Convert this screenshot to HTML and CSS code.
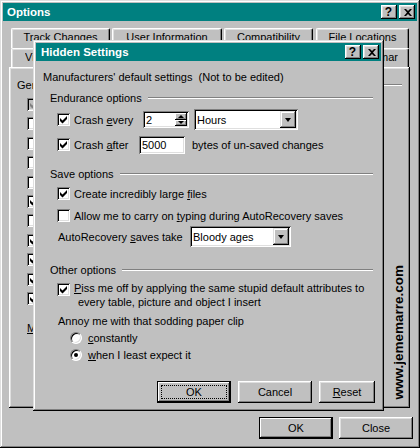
FILE: index.html
```html
<!DOCTYPE html>
<html>
<head>
<meta charset="utf-8">
<title>Options</title>
<link rel="stylesheet" href="styles.css">
</head>
<body>
<div class="window">
  <div class="titlebar">
    <span class="title">Options</span>
    <span class="tbtn q">?</span>
    <span class="tbtn"><svg width="8" height="7" viewBox="0 0 8 7"><path d="M0 0h2l2 2 2-2h2L5 3.5 8 7H6L4 5 2 7H0l3-3.5z"/></svg></span>
  </div>

  <div class="tabs">
    <div class="tabrow back">
      <div class="tab t-tc">Track Changes</div>
      <div class="tab t-ui">User Information</div>
      <div class="tab t-co">Compatibility</div>
      <div class="tab t-fl">File Locations</div>
    </div>
    <div class="tabrow front">
      <div class="tab t-vi"><span class="clip-v">View</span></div>
      <div class="tab t-ge"></div>
      <div class="tab t-ed"></div>
      <div class="tab t-pr"></div>
      <div class="tab t-sa"></div>
      <div class="tab t-sg"><span class="clip-sg"><span>Spelling &amp; Grammar</span></span></div>
    </div>
  </div>

  <div class="panel">
    <div class="grp gen-head"><span class="clip-gen">General options</span><i class="rule gen-rule"></i></div>
    <div class="gen-list">
      <div class="gen-item"><span class="box dis"><svg width="13" height="13" viewBox="0 0 13 13"><polygon points="3,5 5.5,7.5 10,3 10,6 5.5,10.5 3,8"/></svg></span></div>
      <div class="gen-item"><span class="box"></span></div>
      <div class="gen-item"><span class="box"></span></div>
      <div class="gen-item"><span class="box"></span></div>
      <div class="gen-item"><span class="box"></span></div>
      <div class="gen-item"><span class="box"><svg width="13" height="13" viewBox="0 0 13 13"><polygon points="3,5 5.5,7.5 10,3 10,6 5.5,10.5 3,8"/></svg></span></div>
      <div class="gen-item"><span class="box"></span></div>
      <div class="gen-item"><span class="box"><svg width="13" height="13" viewBox="0 0 13 13"><polygon points="3,5 5.5,7.5 10,3 10,6 5.5,10.5 3,8"/></svg></span></div>
      <div class="gen-item"><span class="box"><svg width="13" height="13" viewBox="0 0 13 13"><polygon points="3,5 5.5,7.5 10,3 10,6 5.5,10.5 3,8"/></svg></span></div>
      <div class="gen-item"><span class="box"><svg width="13" height="13" viewBox="0 0 13 13"><polygon points="3,5 5.5,7.5 10,3 10,6 5.5,10.5 3,8"/></svg></span></div>
      <div class="gen-item"><span class="box"><svg width="13" height="13" viewBox="0 0 13 13"><polygon points="3,5 5.5,7.5 10,3 10,6 5.5,10.5 3,8"/></svg></span></div>
    </div>
    <div class="units"><u>M</u>easurement units:</div>
  </div>

  <div class="mainbtns">
    <div class="btn def">OK</div>
    <div class="btn">Close</div>
  </div>

  <div class="watermark">www.jememarre.com</div>

  <div class="dialog">
    <div class="titlebar dtitle">
      <span class="title">Hidden Settings</span>
      <span class="tbtn q">?</span>
      <span class="tbtn"><svg width="8" height="7" viewBox="0 0 8 7"><path d="M0 0h2l2 2 2-2h2L5 3.5 8 7H6L4 5 2 7H0l3-3.5z"/></svg></span>
    </div>
    <div class="dbody">
      <div class="r r-manu">Manufacturers' default settings&nbsp; (Not to be edited)</div>

      <div class="r grp r-endur"><span>Endurance options</span><i class="rule"></i></div>
      <div class="r r-every">
        <div class="chk lbl-every"><span class="box"><svg width="13" height="13" viewBox="0 0 13 13"><polygon points="3,5 5.5,7.5 10,3 10,6 5.5,10.5 3,8"/></svg></span><span>Crash <u>e</u>very</span></div>
        <div class="field spin"><span class="val">2</span><span class="spinbtns"><b class="sb"><i class="up"></i></b><b class="sb"><i class="dn"></i></b></span></div>
        <div class="field combo c-hours"><span class="val">Hours</span><b class="dropbtn"><i class="dn2"></i></b></div>
      </div>
      <div class="r r-after">
        <div class="chk lbl-after"><span class="box"><svg width="13" height="13" viewBox="0 0 13 13"><polygon points="3,5 5.5,7.5 10,3 10,6 5.5,10.5 3,8"/></svg></span><span>Crash <u>a</u>fter</span></div>
        <div class="field num"><span class="val">5000</span></div>
        <span class="bytes">bytes of un-saved changes</span>
      </div>

      <div class="r grp r-save"><span>Save options</span><i class="rule"></i></div>
      <div class="r chk r-create"><span class="box"><svg width="13" height="13" viewBox="0 0 13 13"><polygon points="3,5 5.5,7.5 10,3 10,6 5.5,10.5 3,8"/></svg></span><span>Create incredibly large <u>f</u>iles</span></div>
      <div class="r chk r-allow"><span class="box"></span><span>Allow me to carry on <u>t</u>yping during AutoRecovery saves</span></div>
      <div class="r r-auto">
        <span class="lbl-auto">AutoRecovery <u>s</u>aves take</span>
        <div class="field combo c-ages"><span class="val">Bloody ages</span><b class="dropbtn"><i class="dn2"></i></b></div>
      </div>

      <div class="r grp r-other"><span>Other options</span><i class="rule"></i></div>
      <div class="r chk r-piss"><span class="box"><svg width="13" height="13" viewBox="0 0 13 13"><polygon points="3,5 5.5,7.5 10,3 10,6 5.5,10.5 3,8"/></svg></span><span class="piss-text"><u>P</u>iss me off by applying the same stupid default attributes to<br>every table, picture and object I insert</span></div>
      <div class="r r-annoy">Annoy me with that sodding paper clip</div>
      <div class="r rad r-const"><span class="radio"></span><span><u>c</u>onstantly</span></div>
      <div class="r rad r-when"><span class="radio on"></span><span><u>w</u>hen I least expect it</span></div>

      <div class="r r-btns">
        <div class="btn def dok"><span class="focus">OK</span></div>
        <div class="btn dcancel">Cancel</div>
        <div class="btn dreset"><span><u>R</u>eset</span></div>
      </div>
    </div>
  </div>
</div>
</body>
</html>
```

FILE: styles.css
```css
* { box-sizing: border-box; }
html, body { margin: 0; padding: 0; }
body {
  width: 420px;
  height: 448px;
  overflow: hidden;
  background: #c0c0c0;
  font-family: "Liberation Sans", Arial, sans-serif;
  font-size: 11px;
  color: #000;
}
u { text-decoration: underline; text-underline-offset: 1px; }

.window {
  position: relative;
  width: 420px;
  height: 448px;
  padding: 3px;
  background: #c0c0c0;
  box-shadow: inset -1px -1px #000, inset 1px 1px #dfdfdf, inset -2px -2px #808080, inset 2px 2px #fff;
}

/* title bars */
.titlebar {
  height: 18px;
  background: #008080;
  display: flex;
  align-items: center;
  padding: 0 2px;
  color: #fff;
}
.title {
  flex: 1;
  padding-left: 2px;
  font-weight: bold;
  font-size: 11.5px;
  white-space: nowrap;
}
.dtitle .title { padding-left: 3px; }
.tbtn {
  width: 16px;
  height: 14px;
  margin-left: 2px;
  background: #c0c0c0;
  color: #000;
  display: flex;
  align-items: center;
  justify-content: center;
  box-shadow: inset -1px -1px #000, inset 1px 1px #fff, inset -2px -2px #808080, inset 2px 2px #dfdfdf;
}
.tbtn.q { font-weight: bold; font-size: 12px; line-height: 14px; padding-right: 1px; }
.tbtn svg { display: block; margin-left: 1px; }

/* tabs */
.tabs { margin-top: 7px; padding-left: 8px; }
.tabrow { display: flex; }
.tabrow.back { height: 20px; }
.tabrow.front { height: 19px; }
.tab {
  height: 100%;
  background: #c0c0c0;
  border-top: 1px solid #fff;
  border-left: 1px solid #fff;
  border-right: 1px solid #000;
  border-radius: 2px 2px 0 0;
  box-shadow: inset -1px 0 #808080, inset 1px 1px #dfdfdf;
  text-align: center;
  line-height: 17px;
  white-space: nowrap;
  overflow: hidden;
}
.t-tc { width: 99px; }
.t-ui { width: 110px; margin-left: 2px; }
.t-co { width: 89px; margin-left: 2px; }
.t-fl { width: 93px; margin-left: 3px; }
.t-vi { width: 50px; text-align: left; padding-left: 13px; }
.t-ge { width: 62px; }
.t-ed { width: 55px; }
.t-pr { width: 58px; }
.t-sa { width: 62px; }
.t-sg { width: 111px; display: flex; justify-content: flex-end; padding-right: 10px; }
.clip-v { display: inline-block; width: 8px; overflow: hidden; vertical-align: top; }
.clip-sg { display: flex; justify-content: flex-end; width: 15px; overflow: hidden; }

/* panel */
.panel {
  margin-left: 6px;
  width: 401px;
  height: 341px;
  padding: 2px;
  box-shadow: inset -1px -1px #000, inset 1px 1px #fff, inset -2px -2px #808080, inset 2px 2px #dfdfdf;
}
.grp { display: flex; align-items: center; height: 16px; white-space: nowrap; }
.rule {
  flex: 1;
  height: 2px;
  margin-left: 6px;
  border-top: 1px solid #808080;
  border-bottom: 1px solid #fff;
}
.gen-head { margin: 8px 6px 0 6px; }
.clip-gen { width: 16px; overflow: hidden; }
.gen-rule { margin-left: 60px; }
.gen-list { margin-top: 5px; padding-left: 16px; }
.gen-item { height: 19.4px; display: flex; }
.units { margin: 9px 0 0 16px; width: 7px; height: 16px; line-height: 16px; white-space: nowrap; overflow: hidden; }

.box {
  flex: none;
  width: 13px;
  height: 13px;
  background: #fff;
  box-shadow: inset 1px 1px #808080, inset -1px -1px #fff, inset 2px 2px #000, inset -2px -2px #dfdfdf;
}
.box svg { display: block; }
.box.dis { background: #c0c0c0; }
.box.dis svg { fill: #808080; }

/* main buttons */
.mainbtns {
  display: flex;
  justify-content: flex-end;
  gap: 6px;
  margin-top: 9px;
  padding-right: 4px;
}
.btn {
  width: 74px;
  height: 22px;
  display: flex;
  align-items: center;
  justify-content: center;
  background: #c0c0c0;
  box-shadow: inset -1px -1px #000, inset 1px 1px #fff, inset -2px -2px #808080, inset 2px 2px #dfdfdf;
}
.btn.def {
  box-shadow: inset 0 0 0 1px #000, inset -2px -2px #000, inset 2px 2px #fff, inset -3px -3px #808080;
}

.watermark {
  position: absolute;
  left: 391px;
  top: 265px;
  writing-mode: vertical-rl;
  transform: rotate(180deg);
  font-weight: bold;
  font-size: 13.5px;
  line-height: 16px;
  color: #000;
  white-space: nowrap;
}

/* dialog */
.dialog {
  position: absolute;
  left: 33px;
  top: 40px;
  width: 351px;
  height: 371px;
  padding: 3px;
  background: #c0c0c0;
  box-shadow: inset -1px -1px #000, inset 1px 1px #dfdfdf, inset -2px -2px #808080, inset 2px 2px #fff;
}
.r { white-space: nowrap; }
.r-manu { margin: 8px 0 0 7px; height: 16px; line-height: 16px; }
.dbody .grp { margin-left: 14px; margin-right: 8px; }
.r-endur { margin-top: 5px; }
.r-every, .r-after, .r-auto { display: flex; align-items: center; height: 21px; }
.r-every { margin-top: 3px; }
.r-after { margin-top: 4px; }
.chk { display: flex; align-items: center; gap: 4px; margin-left: 21px; }
.lbl-every { width: 86px; }
.lbl-after { width: 82px; }

.field {
  position: relative;
  background: #fff;
  box-shadow: inset 1px 1px #808080, inset -1px -1px #fff, inset 2px 2px #000, inset -2px -2px #dfdfdf;
  display: flex;
  align-items: center;
  padding: 2px;
}
.field .val { flex: 1; padding-left: 1px; }
.spin { width: 46px; height: 17px; }
.spinbtns { display: flex; flex-direction: column; width: 12px; height: 13px; }
.sb {
  flex: 1;
  display: flex;
  align-items: center;
  justify-content: center;
  background: #c0c0c0;
  box-shadow: inset -1px -1px #000, inset 1px 1px #fff, inset -2px -2px #808080;
}
.up { width: 0; height: 0; border-left: 3px solid transparent; border-right: 3px solid transparent; border-bottom: 3px solid #000; }
.dn { width: 0; height: 0; border-left: 3px solid transparent; border-right: 3px solid transparent; border-top: 3px solid #000; }
.combo { height: 21px; }
.c-hours { width: 104px; margin-left: 5px; }
.dropbtn {
  width: 16px;
  height: 17px;
  display: flex;
  align-items: center;
  justify-content: center;
  background: #c0c0c0;
  box-shadow: inset -1px -1px #000, inset 1px 1px #dfdfdf, inset -2px -2px #808080, inset 2px 2px #fff;
}
.dn2 { width: 0; height: 0; border-left: 3.5px solid transparent; border-right: 3.5px solid transparent; border-top: 4px solid #000; }

.num { width: 46px; height: 18px; }
.bytes { margin-left: 7px; }

.r-save { margin-top: 11px; }
.r-create { margin-top: 3px; height: 17px; }
.r-allow { margin-top: 5px; height: 17px; }
.r-auto { margin-top: 2px; }
.lbl-auto { margin-left: 22px; width: 132px; }
.c-ages { width: 101px; }

.r-other { margin-top: 15px; }
.r-piss { margin-top: 3px; align-items: flex-start; line-height: 14px; height: 28px; }
.r-piss .box { margin-top: 2px; }
.piss-text { padding-left: 4px; text-indent: -4px; }
.r-annoy { margin: 4px 0 0 22px; height: 16px; line-height: 16px; }
.rad { display: flex; align-items: center; gap: 6px; margin-left: 34px; height: 16px; }
.r-const { margin-top: 1px; }
.r-when { margin-top: 1px; }
.radio {
  position: relative;
  width: 12px;
  height: 12px;
  border-radius: 50%;
  background: #fff;
  border: 1px solid;
  border-color: #808080 #fff #fff #808080;
  box-shadow: inset 1px 1px #000, inset -1px -1px #dfdfdf;
}
.radio.on::after {
  content: "";
  position: absolute;
  left: 3px;
  top: 3px;
  width: 4px;
  height: 4px;
  border-radius: 50%;
  background: #000;
}

.r-btns { display: flex; justify-content: flex-end; gap: 7px; margin: 18px 6px 0 0; }
.dok { width: 74px; }
.dcancel { width: 74px; }
.dreset { width: 56px; }
.focus {
  width: 66px;
  height: 14px;
  border: 1px dotted #000;
  display: flex;
  align-items: center;
  justify-content: center;
}
```
